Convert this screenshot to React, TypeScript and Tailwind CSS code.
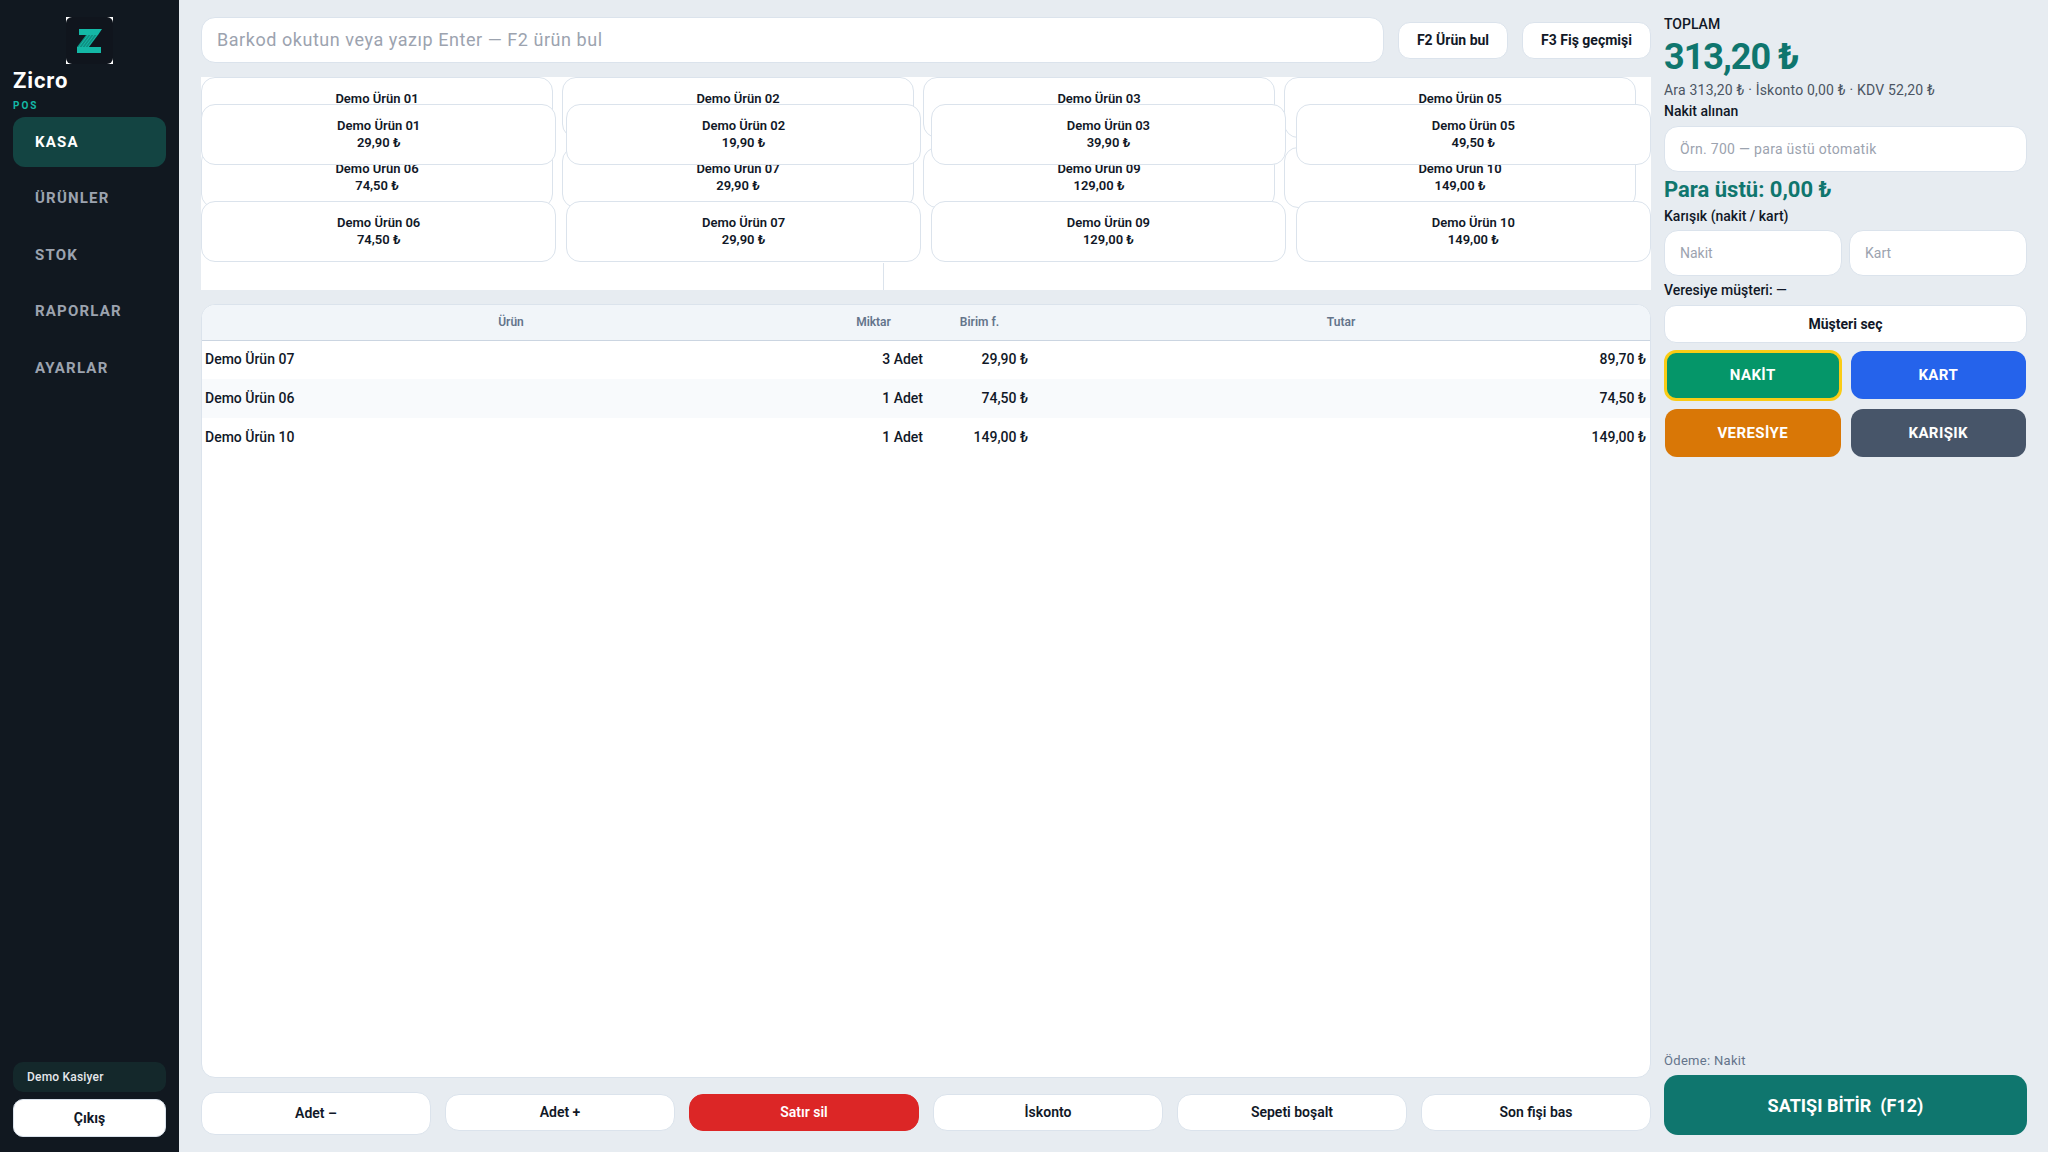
const nav = ['KASA', 'ÜRÜNLER', 'STOK', 'RAPORLAR', 'AYARLAR'];

const products = [
  { name: 'Demo Ürün 01', price: '29,90 ₺' },
  { name: 'Demo Ürün 02', price: '19,90 ₺' },
  { name: 'Demo Ürün 03', price: '39,90 ₺' },
  { name: 'Demo Ürün 05', price: '49,50 ₺' },
  { name: 'Demo Ürün 06', price: '74,50 ₺' },
  { name: 'Demo Ürün 07', price: '29,90 ₺' },
  { name: 'Demo Ürün 09', price: '129,00 ₺' },
  { name: 'Demo Ürün 10', price: '149,00 ₺' },
];

const cartRows = [
  { name: 'Demo Ürün 07', qty: '3 Adet', unit: '29,90 ₺', total: '89,70 ₺' },
  { name: 'Demo Ürün 06', qty: '1 Adet', unit: '74,50 ₺', total: '74,50 ₺' },
  { name: 'Demo Ürün 10', qty: '1 Adet', unit: '149,00 ₺', total: '149,00 ₺' },
];

const Logo = () => (
  <div className="h-[47px] w-[47px] bg-white">
    <svg viewBox="0 0 47 47" className="h-full w-full">
      <rect width="47" height="47" rx="6" fill="#10151d" />
      <path d="M13 12h23l-4 6H13z" fill="#14b8a6" />
      <path d="M11 30h24v6H11z" fill="#14b8a6" />
      <path d="M20 18h12L23 30H11z" fill="#0f8f82" />
      <path d="M22 18l-9 12M25 18l-9 12M28 18l-9 12M31 18l-9 12" stroke="#14b8a6" strokeWidth="1" />
    </svg>
  </div>
);

const ProductCard = ({ name, price }: { name: string; price: string }) => (
  <button className="flex h-[61px] flex-col items-center rounded-[14px] border border-[#dbe3ec] bg-white pt-[12px] text-[13px] leading-[17px] font-semibold text-[#111827]">
    <span>{name}</span>
    <span>{price}</span>
  </button>
);

const ActionButton = ({ label, className }: { label: string; className: string }) => (
  <button className={`w-[230px] rounded-[14px] border text-[14px] font-semibold ${className}`}>{label}</button>
);

const PayButton = ({ label, className }: { label: string; className: string }) => (
  <button className={`rounded-[12px] text-[15px] font-bold tracking-[0.4px] text-white ${className}`}>{label}</button>
);

const App = () => {
  return (
    <div className="flex h-[1152px] w-[2048px] overflow-hidden bg-[#e7ecf1] font-['Roboto',sans-serif] text-[#111827]">
      <aside className="flex w-[179px] shrink-0 flex-col bg-[#111820] px-[13px] pt-[17px] pb-[15px]">
        <div className="flex justify-center">
          <Logo />
        </div>
        <p className="mt-[4px] text-[22px] leading-[26px] font-bold tracking-[0.9px] text-white">Zicro</p>
        <p className="mt-[6px] text-[10px] leading-[12px] font-bold tracking-[2px] text-[#14b8a6]">POS</p>
        <nav className="mt-[5px] flex flex-col gap-[6.5px]">
          {nav.map((item, i) => (
            <div
              key={item}
              className={`flex h-[50px] items-center rounded-[12px] px-[22px] text-[15px] font-bold tracking-[1.2px] ${
                i === 0 ? 'bg-[#134442] text-white' : 'text-[#9ca3af]'
              }`}
            >
              {item}
            </div>
          ))}
        </nav>
        <div className="mt-auto flex h-[30px] items-center rounded-[10px] bg-[#14282b] px-[14px] text-[12px] font-medium tracking-[0.2px] text-[#e5e7eb]">
          Demo Kasiyer
        </div>
        <button className="mt-[7px] h-[38px] rounded-[10px] border border-[#dbe3ec] bg-white text-[14px] font-bold text-[#111827]">
          Çıkış
        </button>
      </aside>

      <main className="flex w-[1472px] shrink-0 flex-col pt-[17px] pl-[22px]">
        <div className="flex w-[1450px] items-center gap-[14px]">
          <input
            readOnly
            placeholder="Barkod okutun veya yazıp Enter — F2 ürün bul"
            className="h-[46px] w-[1183px] rounded-[14px] border border-[#dbe3ec] bg-white px-[15px] pb-[2px] text-[18px] tracking-[0.55px] placeholder:text-[#9ca3af]"
          />
          <button className="h-[37px] w-[110px] rounded-[12px] border border-[#dbe3ec] bg-white text-[14px] font-bold">F2 Ürün bul</button>
          <button className="h-[37px] w-[129px] rounded-[12px] border border-[#dbe3ec] bg-white text-[14px] font-bold">F3 Fiş geçmişi</button>
        </div>

        <section className="relative mt-[14px] h-[213px] w-[1450px] overflow-hidden bg-white">
          <div className="grid w-[1435px] grid-cols-4 gap-x-[9px] gap-y-[9px]">
            {products.map((p) => (
              <ProductCard key={p.name} {...p} />
            ))}
          </div>
          <div className="absolute top-[27px] left-0 grid w-[1450px] grid-cols-4 gap-x-[9.5px] gap-y-[36px]">
            {products.map((p) => (
              <ProductCard key={p.name} {...p} />
            ))}
          </div>
          <div className="absolute top-[186px] left-[682px] h-[27px] w-px bg-[#dbe3ec]" />
        </section>

        <section className="mt-[14px] w-[1450px] flex-1 overflow-hidden rounded-[14px] border border-[#dbe3ec] bg-white">
          <table className="w-full table-fixed border-collapse text-[14px] font-medium">
            <thead>
              <tr className="h-[35px] border-b border-[#cbd5e1] bg-[#f1f5f9] text-[12px] text-[#64748b]">
                <th className="w-[618px] font-semibold">Ürün</th>
                <th className="w-[107px] font-semibold">Miktar</th>
                <th className="w-[105px] font-semibold">Birim f.</th>
                <th className="font-semibold">Tutar</th>
              </tr>
            </thead>
            <tbody>
              {cartRows.map((row, i) => (
                <tr key={row.name} className={`h-[39px] ${i === 1 ? 'bg-[#f8fafc]' : 'bg-white'}`}>
                  <td className="px-[3px]">{row.name}</td>
                  <td className="px-[4px] text-right">{row.qty}</td>
                  <td className="px-[4px] text-right">{row.unit}</td>
                  <td className="px-[4px] text-right">{row.total}</td>
                </tr>
              ))}
            </tbody>
          </table>
        </section>

        <div className="mt-[14px] mb-[17px] flex h-[43px] w-[1450px] items-start justify-between">
          <ActionButton label="Adet –" className="h-[43px] border-[#dbe3ec] bg-white" />
          <ActionButton label="Adet +" className="mt-[2px] h-[37px] border-[#dbe3ec] bg-white" />
          <ActionButton label="Satır sil" className="mt-[2px] h-[37px] border-[#dc2626] bg-[#dc2626] text-white" />
          <ActionButton label="İskonto" className="mt-[2px] h-[37px] border-[#dbe3ec] bg-white" />
          <ActionButton label="Sepeti boşalt" className="mt-[2px] h-[37px] border-[#dbe3ec] bg-white" />
          <ActionButton label="Son fişi bas" className="mt-[2px] h-[37px] border-[#dbe3ec] bg-white" />
        </div>
      </main>

      <aside className="ml-[13px] flex w-[363px] shrink-0 flex-col pt-[15px] pb-[17px]">
        <p className="text-[14px] leading-[18px] font-medium">TOPLAM</p>
        <p className="mt-[2px] text-[36px] leading-[44px] font-bold tracking-[-1px] text-[#0f766e]">313,20 ₺</p>
        <p className="mt-[2px] text-[14px] leading-[18px] tracking-[0.2px] text-[#4b5563]">Ara 313,20 ₺ · İskonto 0,00 ₺ · KDV 52,20 ₺</p>
        <p className="mt-[3px] text-[14px] leading-[18px] font-medium">Nakit alınan</p>
        <input
          readOnly
          placeholder="Örn. 700 — para üstü otomatik"
          className="mt-[6px] h-[46px] rounded-[14px] border border-[#dbe3ec] bg-white px-[15px] text-[14px] tracking-[0.3px] placeholder:text-[#9ca3af]"
        />
        <p className="mt-[4px] text-[22px] leading-[27px] font-bold text-[#0f766e]">Para üstü: 0,00 ₺</p>
        <p className="mt-[4px] text-[14px] leading-[18px] font-medium">Karışık (nakit / kart)</p>
        <div className="mt-[5px] grid grid-cols-2 gap-[7px]">
          <input readOnly placeholder="Nakit" className="h-[46px] min-w-0 rounded-[14px] border border-[#dbe3ec] bg-white px-[15px] text-[14px] placeholder:text-[#9ca3af]" />
          <input readOnly placeholder="Kart" className="h-[46px] min-w-0 rounded-[14px] border border-[#dbe3ec] bg-white px-[15px] text-[14px] placeholder:text-[#9ca3af]" />
        </div>
        <p className="mt-[5px] text-[14px] leading-[18px] font-medium">Veresiye müşteri: —</p>
        <button className="mt-[6px] h-[38px] rounded-[12px] border border-[#dbe3ec] bg-white text-[14px] font-bold">Müşteri seç</button>
        <div className="mt-[7px] grid grid-cols-2 gap-x-[8px] gap-y-[8px]">
          <PayButton label="NAKİT" className="h-[51px] border-[3px] border-[#facc15] bg-[#059669]" />
          <PayButton label="KART" className="mx-[1px] my-[1px] h-[48px] bg-[#2563eb]" />
          <PayButton label="VERESİYE" className="mx-[1px] h-[48px] bg-[#d97706]" />
          <PayButton label="KARIŞIK" className="mx-[1px] h-[48px] bg-[#475569]" />
        </div>
        <p className="mt-auto text-[13px] leading-[17px] tracking-[0.3px] text-[#64748b]">Ödeme: Nakit</p>
        <button className="mt-[6px] h-[60px] rounded-[14px] bg-[#0f766e] text-[18px] font-bold whitespace-pre text-white">SATIŞI BİTİR  (F12)</button>
      </aside>
    </div>
  );
};

export default App;
